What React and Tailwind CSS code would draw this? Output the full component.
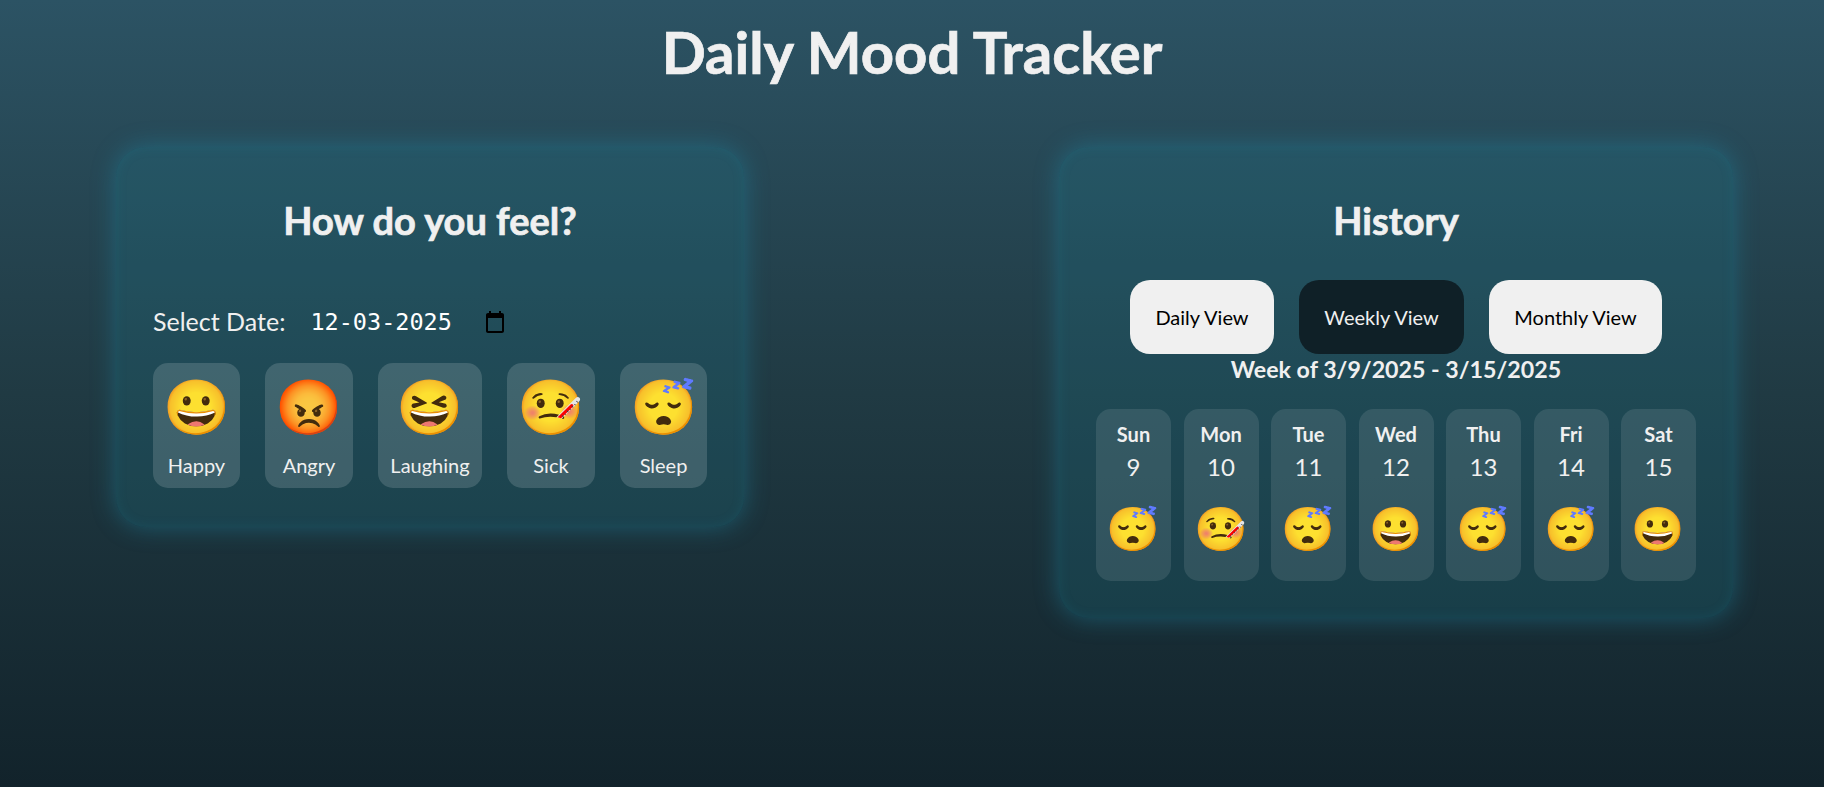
const moods = [
  { emoji: '😀', label: 'Happy', width: 'w-[87px]' },
  { emoji: '😡', label: 'Angry', width: 'w-[88px]' },
  { emoji: '😆', label: 'Laughing', width: 'w-[104px]' },
  { emoji: '🤒', label: 'Sick', width: 'w-[88px]' },
  { emoji: '😴', label: 'Sleep', width: 'w-[87px]' },
];

const week = [
  { day: 'Sun', date: 9, emoji: '😴' },
  { day: 'Mon', date: 10, emoji: '🤒' },
  { day: 'Tue', date: 11, emoji: '😴' },
  { day: 'Wed', date: 12, emoji: '😀' },
  { day: 'Thu', date: 13, emoji: '😴' },
  { day: 'Fri', date: 14, emoji: '😴' },
  { day: 'Sat', date: 15, emoji: '😀' },
];

const CalendarIcon = () => (
  <svg width="24" height="24" viewBox="0 0 24 24" className="ml-[31px] shrink-0" fill="black">
    <path d="M19 3h-1V1h-2v2H8V1H6v2H5C3.9 3 3 3.9 3 5v16c0 1.1.9 2 2 2h14c1.1 0 2-.9 2-2V5c0-1.1-.9-2-2-2zm0 18H5V8h14v13z" />
  </svg>
);

const App = () => {
  return (
    <div className="h-[787px] overflow-hidden bg-gradient-to-b from-[#2c5364] via-[#203a43] to-[#12232b] font-['Lato','Noto_Color_Emoji',sans-serif] text-[#f0f0f0]">
      <h1 className="pt-[16px] text-center text-[58px] font-bold leading-[72px] [-webkit-text-stroke:0.7px_#f0f0f0]">Daily Mood Tracker</h1>

      <div className="mt-[59px] flex items-start pl-[116px]">
        {/* Mood picker */}
        <section className="h-[380px] w-[628px] rounded-[30px] bg-[rgba(30,150,170,0.17)] px-[37px] pt-[48px] shadow-[0_0_25px_rgba(30,140,170,0.45),inset_0_0_12px_rgba(30,140,170,0.15)]">
          <h2 className="text-center text-[38px] font-bold leading-[50px] [-webkit-text-stroke:0.7px_#f0f0f0]">How do you feel?</h2>
          <div className="mt-[52px] flex h-[50px] items-center">
            <span className="text-[25px]">Select Date:</span>
            <span className="ml-[25px] mt-[2px] font-['DejaVu_Sans_Mono',monospace] text-[23.5px] text-white">12-03-2025</span>
            <CalendarIcon />
          </div>
          <div className="mt-[16px] flex gap-[25px]">
            {moods.map((mood) => (
              <button key={mood.label} className={`flex h-[125px] flex-col items-center rounded-[15px] bg-white/15 pt-[8px] ${mood.width}`}>
                <span className="text-[54px] leading-[70px]">{mood.emoji}</span>
                <span className="mt-[11px] text-[20px] leading-[26px]">{mood.label}</span>
              </button>
            ))}
          </div>
        </section>

        {/* History */}
        <section className="ml-[315px] h-[471px] w-[674px] rounded-[30px] bg-[rgba(30,150,170,0.17)] px-[37px] pt-[48px] shadow-[0_0_25px_rgba(30,140,170,0.45),inset_0_0_12px_rgba(30,140,170,0.15)]">
          <h2 className="text-center text-[38px] font-bold leading-[50px] [-webkit-text-stroke:0.7px_#f0f0f0]">History</h2>
          <div className="mt-[35px] flex justify-center gap-[25px]">
            <button className="h-[74px] w-[144px] rounded-[20px] bg-[#f0f0f0] text-[20px] text-black">Daily View</button>
            <button className="h-[74px] w-[165px] rounded-[20px] bg-[#0f2027] text-[20px] text-[#f0f0f0]">Weekly View</button>
            <button className="h-[74px] w-[173px] rounded-[20px] bg-[#f0f0f0] text-[20px] text-black">Monthly View</button>
          </div>
          <div className="text-center text-[23.2px] font-bold leading-[30px]">Week of 3/9/2025 - 3/15/2025</div>
          <div className="mt-[25px] grid grid-cols-7 gap-[12.5px]">
            {week.map((item) => (
              <div key={item.day} className="flex h-[172px] flex-col items-center rounded-[15px] bg-white/10 pt-[12px]">
                <span className="text-[20px] font-bold leading-[26px]">{item.day}</span>
                <span className="mt-[4px] text-[24px] leading-[32px]">{item.date}</span>
                <span className="mt-[15px] text-[43px] leading-[60px]">{item.emoji}</span>
              </div>
            ))}
          </div>
        </section>
      </div>
    </div>
  );
};

export default App;
